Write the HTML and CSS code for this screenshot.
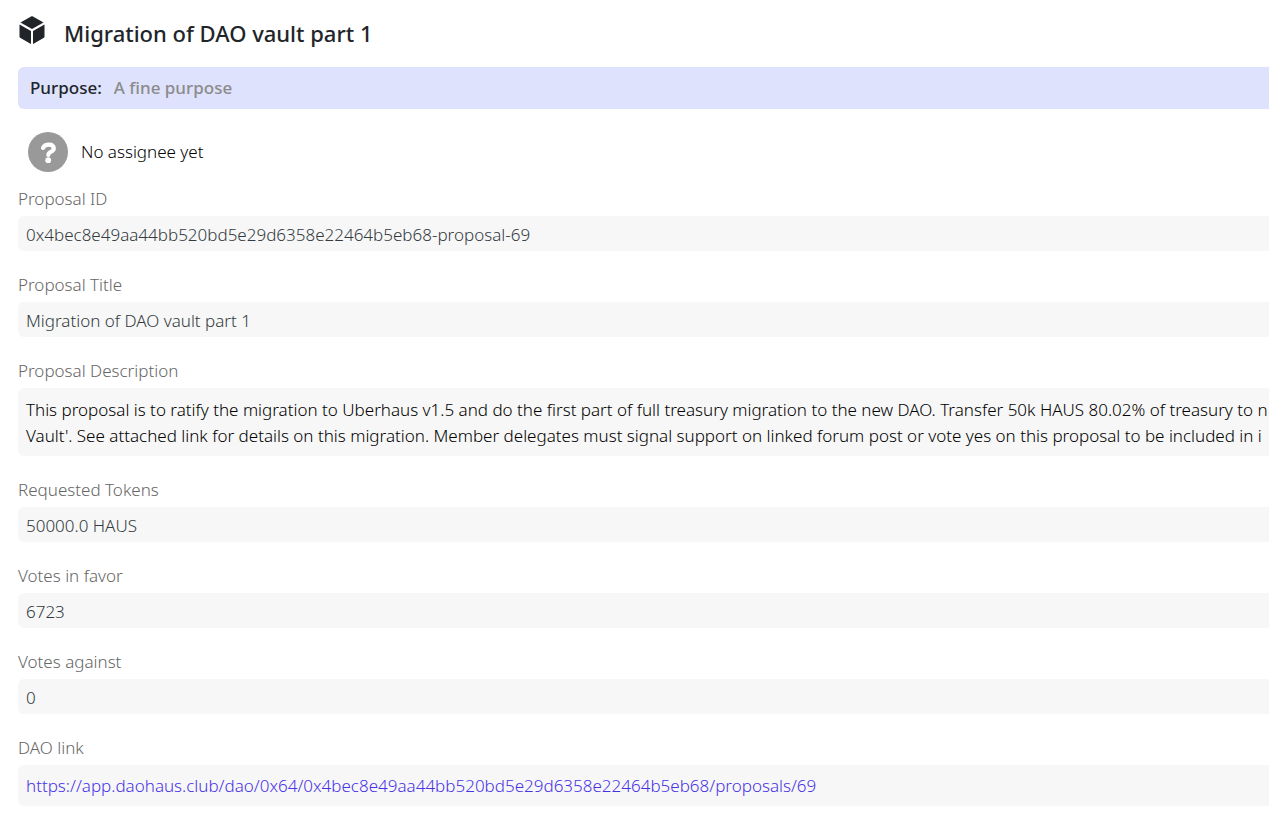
FILE: index.html
```html
<!DOCTYPE html>
<html lang="en">
<head>
<meta charset="utf-8">
<title>Migration of DAO vault part 1</title>
<link rel="stylesheet" href="styles.css">
</head>
<body>
<main class="page">
  <header class="header">
    <svg class="cube" viewBox="0 0 28 30" aria-hidden="true">
      <path d="M14 1 25.500 7.500 14 14 2.500 7.500Z"/>
      <path d="M1.500 9.500 13 16V29L2.500 23Q1.500 22.500 1.500 21.500Z"/>
      <path d="M26.500 9.500 15 16V29L25.500 23Q26.500 22.500 26.500 21.500Z"/>
    </svg>
    <h1 class="title">Migration of DAO vault part 1</h1>
  </header>
  <div class="purpose">
    <label class="purpose-label" for="purpose">Purpose:</label>
    <input class="purpose-input" id="purpose" type="text" placeholder="A fine purpose">
  </div>
  <div class="assignee">
    <svg class="avatar" viewBox="0 0 40 40" aria-hidden="true">
      <circle cx="20" cy="20" r="20" fill="#999"/>
      <path d="M15 15.800C17 11.500 25.800 11.200 25.800 16.400C25.800 20 20.300 19.500 20.300 23" fill="none" stroke="#fff" stroke-width="4.200" stroke-linecap="round" stroke-linejoin="round"/>
      <circle cx="20.200" cy="28.200" r="2.900" fill="#fff"/>
    </svg>
    <span>No assignee yet</span>
  </div>
  <dl class="fields">
    <div class="field"><dt class="label">Proposal ID</dt><dd class="value">0x4bec8e49aa44bb520bd5e29d6358e22464b5eb68-proposal-69</dd></div>
    <div class="field"><dt class="label">Proposal Title</dt><dd class="value">Migration of DAO vault part 1</dd></div>
    <div class="field"><dt class="label">Proposal Description</dt><dd class="value description">This proposal is to ratify the migration to Uberhaus v1.5 and do the first part of full treasury migration to the new DAO. Transfer 50k HAUS 80.02% of treasury to n<br>Vault'. See attached link for details on this migration. Member delegates must signal support on linked forum post or vote yes on this proposal to be included in i</dd></div>
    <div class="field"><dt class="label">Requested Tokens</dt><dd class="value">50000.0 HAUS</dd></div>
    <div class="field"><dt class="label">Votes in favor</dt><dd class="value">6723</dd></div>
    <div class="field"><dt class="label">Votes against</dt><dd class="value">0</dd></div>
    <div class="field"><dt class="label">DAO link</dt><dd class="value link-value"><a class="link" href="https://app.daohaus.club/dao/0x64/0x4bec8e49aa44bb520bd5e29d6358e22464b5eb68/proposals/69">https://app.daohaus.club/dao/0x64/0x4bec8e49aa44bb520bd5e29d6358e22464b5eb68/proposals/69</a></dd></div>
  </dl>
</main>
</body>
</html>
```
FILE: styles.css
```css
* { box-sizing: border-box; }
body { margin: 0; background: #fff; color: #212529; font: 300 17px/26px "Noto Sans", "Open Sans", sans-serif; overflow-x: hidden; }
.page { padding: 14px 0 10px 18px; }
.header { display: flex; align-items: center; gap: 18px; height: 38px; }
.cube { width: 28px; height: 30px; fill: #212529; margin-bottom: 6px; }
.title { margin: 0; font-size: 22px; font-weight: 500; line-height: 38px; }
.purpose { display: flex; align-items: center; gap: 12px; height: 42px; margin-top: 15px; padding-left: 12px; background: #dee2fc; border-radius: 6px 0 0 6px; font-weight: 500; }
.purpose-input { flex: 1; padding: 0; border: 0; background: none; font: inherit; }
.purpose-input::placeholder { color: #8b8b8b; opacity: 1; }
.assignee { display: flex; align-items: center; gap: 13px; margin: 23px 0 12px 10px; color: #000; }
.avatar { width: 40px; height: 40px; }
.fields { margin: 0; display: grid; gap: 19px; }
.label { color: #666; line-height: 30px; margin-bottom: 2px; }
.value { margin: 0; padding: 6px 0 3px 8px; background: #f7f7f7; border-radius: 6px 0 0 6px; color: #343a40; white-space: nowrap; overflow: hidden; }
.description { padding: 9px 0 7px 8px; color: #000; }
.link-value { padding: 8px 0 7px 8px; }
.link { color: #4733e6; text-decoration: none; }
```
